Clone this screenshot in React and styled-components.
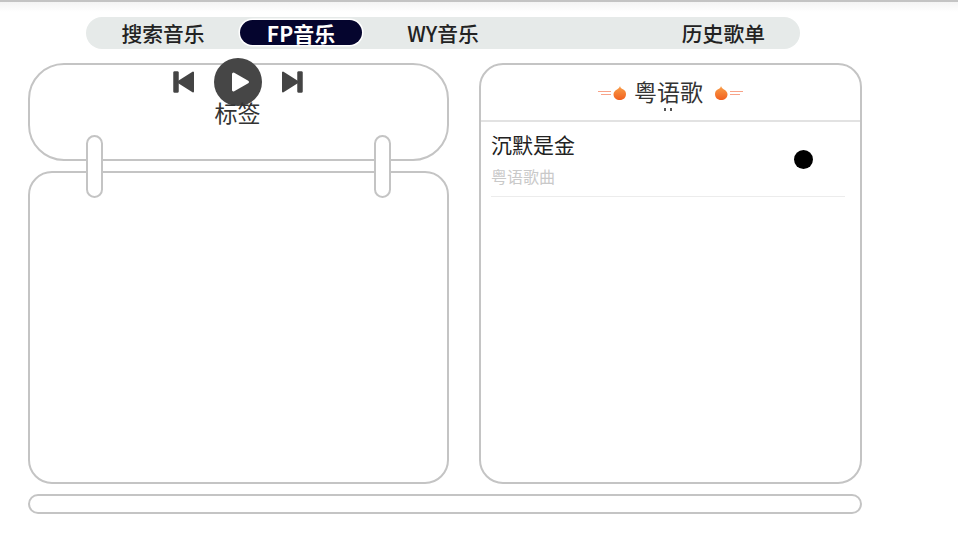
import React from 'react';
import styled, { createGlobalStyle } from 'styled-components';

const GlobalStyle = createGlobalStyle`
    html, body {
        margin: 0;
        padding: 0;
        background: #fff;
        font-family: "Noto Sans CJK SC", "Noto Sans", sans-serif;
    }

    * {
        box-sizing: border-box;
    }
`;

const Page = styled.div`
    position: relative;
    width: 958px;
    height: 539px;
    overflow: hidden;
    padding: 15px 96px 0 28px;
    border-top: 2px solid #c4c4c4;
    background: linear-gradient(#f4f4f4 0, #fff 10px);
`;

const Nav = styled.nav`
    width: 714px;
    height: 32px;
    margin-left: 58px;
    border-radius: 16px;
    background: #e6eae9;
`;

const NavRow = styled.div`
    display: grid;
    grid-template-columns: 154px 122px 162px 1fr;
    height: 100%;
    padding: 2px 35px 2px 0;
`;

const Tab = styled.a`
    display: flex;
    align-items: center;
    justify-content: ${props => (props.$end ? 'flex-end' : 'center')};
    height: 28px;
    font-size: 20.8px;
    font-weight: 500;
    line-height: 28px;
    white-space: nowrap;
    color: #222;
`;

const ActiveTab = styled(Tab)`
    align-items: flex-start;
    height: 25px;
    margin-top: 1px;
    border-radius: 13px;
    font-size: 21px;
    font-weight: 700;
    line-height: 26px;
    color: #fff;
    background: #05052e;
    box-shadow: 0 0 0 1.5px #fff;
`;

const Main = styled.div`
    display: grid;
    grid-template-columns: 421px 383px;
    column-gap: 30px;
    margin-top: 14px;
`;

const LeftColumn = styled.div`
    position: relative;
    display: flex;
    flex-direction: column;
    gap: 10px;
`;

const TagPanel = styled.section`
    display: flex;
    flex-direction: column;
    align-items: center;
    height: 98px;
    border: 2px solid #c4c4c4;
    border-radius: 36px;
`;

const Controls = styled.div`
    display: flex;
    align-items: center;
    gap: 19px;
    height: 48px;
    margin-top: -7px;
    margin-left: -2px;
`;

const SkipButton = styled.svg`
    display: block;
    width: 22px;
    height: 24px;
`;

const PlayButton = styled.div`
    display: flex;
    align-items: center;
    justify-content: center;
    width: 48px;
    height: 48px;
    border-radius: 50%;
    background: #464646;
`;

const TagLabel = styled.div`
    margin-top: -9px;
    margin-left: -2px;
    font-size: 23px;
    line-height: 30px;
    color: #333;
`;

const CoverPanel = styled.section`
    height: 313px;
    border: 2px solid #c4c4c4;
    border-radius: 24px;
`;

const Clip = styled.div`
    position: absolute;
    top: 72px;
    left: ${props => props.$left}px;
    width: 17px;
    height: 63px;
    border: 2px solid #c4c4c4;
    border-radius: 9px;
    background: #fff;
`;

const ListPanel = styled.section`
    height: 421px;
    border: 2px solid #c4c4c4;
    border-radius: 24px;
`;

const ListHeader = styled.header`
    position: relative;
    display: flex;
    align-items: center;
    justify-content: center;
    height: 57px;
    padding-bottom: 4px;
    border-bottom: 2px solid #e2e2e2;
`;

const ListTitle = styled.h2`
    margin: 0 11px 0 7px;
    font-size: 23px;
    font-weight: 400;
    line-height: 30px;
    color: #333;
`;

const Dots = styled.span`
    position: absolute;
    bottom: 9px;
    left: 183px;
    display: flex;
    gap: 4px;

    &::before,
    &::after {
        content: '';
        width: 2px;
        height: 3px;
        background: #555;
    }
`;

const Flame = styled.svg`
    display: block;
    flex: none;
    width: 29px;
    height: 16px;
    margin-top: 4px;
    transform: ${props => (props.$flip ? 'scaleX(-1)' : 'none')};
`;

const SongRow = styled.div`
    position: relative;
    height: 75px;
    margin: 0 15px 0 10px;
    padding-top: 7px;
    border-bottom: 1px solid #ececec;
`;

const SongName = styled.div`
    font-size: 21px;
    line-height: 30px;
    color: #222;
`;

const SongMeta = styled.div`
    margin-top: 6px;
    font-size: 16px;
    line-height: 22px;
    color: #c9c9c9;
`;

const PlayDot = styled.span`
    position: absolute;
    top: 28px;
    left: 303px;
    width: 19px;
    height: 19px;
    border-radius: 50%;
    background: #000;
`;

const ProgressBar = styled.div`
    width: 834px;
    height: 20px;
    margin-top: 10px;
    border: 2px solid #c4c4c4;
    border-radius: 10px;
`;

const Skip = ({ next }) => (
    <SkipButton viewBox="0 0 22 24">
        <g transform={next ? 'matrix(-1 0 0 1 22 0)' : undefined} fill="#444" stroke="#444" strokeLinejoin="round">
            <rect x="0.5" y="1.5" width="5" height="21" rx="1" strokeWidth="0.5" />
            <path d="M20 2.5 L20 21.5 L5 12 Z" strokeWidth="2" />
        </g>
    </SkipButton>
);

const FlameMark = ({ flip }) => (
    <Flame $flip={flip} viewBox="0 0 29 16">
        <defs>
            <linearGradient id={flip ? 'flameB' : 'flameA'} x1="0" y1="0" x2="0" y2="1">
                <stop offset="0" stopColor="#f9a04a" />
                <stop offset="1" stopColor="#f2601f" />
            </linearGradient>
        </defs>
        <path d="M0 6.5 H13 M3 9.5 H13" stroke="#f7997a" strokeWidth="0.9" fill="none" />
        <path
            d="M22 1 C22.4 3 23.4 3.4 25 4.2 C27.2 5.4 28 7 28 9 C28 12.8 25.4 15 22 15 C18.4 15 15.5 12.8 15.5 9.2 C15.5 7 17.2 5.2 19 4.4 C20.4 3.7 21.6 2.6 22 1 Z"
            fill={`url(#${flip ? 'flameB' : 'flameA'})`}
        />
    </Flame>
);

const App = () => (
    <Page>
        <GlobalStyle />
        <Nav>
            <NavRow>
                <Tab>搜索音乐</Tab>
                <ActiveTab>FP音乐</ActiveTab>
                <Tab>WY音乐</Tab>
                <Tab $end>历史歌单</Tab>
            </NavRow>
        </Nav>
        <Main>
            <LeftColumn>
                <TagPanel>
                    <Controls>
                        <Skip />
                        <PlayButton>
                            <svg width="24" height="24" viewBox="0 0 24 24">
                                <path d="M7.5 4 L21.5 12 L7.5 20 Z" fill="#fff" stroke="#fff" strokeWidth="3" strokeLinejoin="round" />
                            </svg>
                        </PlayButton>
                        <Skip next />
                    </Controls>
                    <TagLabel>标签</TagLabel>
                </TagPanel>
                <CoverPanel />
                <Clip $left={58} />
                <Clip $left={346} />
            </LeftColumn>
            <ListPanel>
                <ListHeader>
                    <FlameMark />
                    <ListTitle>粤语歌</ListTitle>
                    <FlameMark flip />
                    <Dots />
                </ListHeader>
                <SongRow>
                    <SongName>沉默是金</SongName>
                    <SongMeta>粤语歌曲</SongMeta>
                    <PlayDot />
                </SongRow>
            </ListPanel>
        </Main>
        <ProgressBar />
    </Page>
);

export default App;
